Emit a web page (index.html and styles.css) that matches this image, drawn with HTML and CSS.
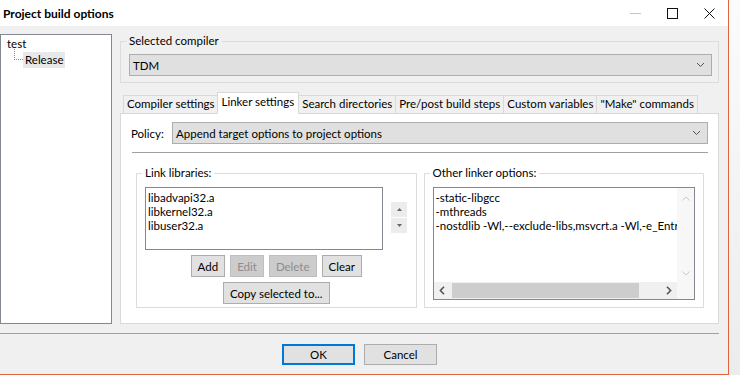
FILE: index.html
```html
<!DOCTYPE html>
<html lang="en">
  <head>
    <meta charset="UTF-8" />
    <meta name="viewport" content="width=device-width, initial-scale=1.0" />
    <title>Project build options</title>
    <link rel="stylesheet" href="styles.css">
  </head>
  <body>
    <div class="desktop">
      <div class="window">
        <div class="titlebar">
          <span class="title">Project build options</span>
          <div class="controls">
            <span class="ctl">
              <svg width="11" height="1" viewBox="0 0 11 1"><path d="M0 0.5H11" stroke="#c4c4c4" /></svg>
            </span>
            <span class="ctl">
              <svg width="11" height="11" viewBox="0 0 11 11"><rect x="0.5" y="0.5" width="10" height="10" fill="none" stroke="#111" /></svg>
            </span>
            <span class="ctl">
              <svg width="11" height="11" viewBox="0 0 11 11"><path d="M0.5 0.5L10.5 10.5M10.5 0.5L0.5 10.5" stroke="#111" /></svg>
            </span>
          </div>
        </div>

        <div class="main">
          <div class="tree">
            <div class="node">test</div>
            <div class="node child">
              <span class="branch"></span>
              <span class="selected">Release</span>
            </div>
          </div>

          <div class="options">
            <fieldset class="group compiler">
              <legend>Selected compiler</legend>
              <div class="combo">
                <span>TDM</span>
                <svg width="9" height="6" viewBox="0 0 9 6"><path d="M1 1L4.5 4.5L8 1" fill="none" stroke="#555" /></svg>
              </div>
            </fieldset>

            <div class="tabs">
              <span class="tab">Compiler settings</span>
              <span class="tab active">Linker settings</span>
              <span class="tab">Search directories</span>
              <span class="tab">Pre/post build steps</span>
              <span class="tab">Custom variables</span>
              <span class="tab">"Make" commands</span>
            </div>

            <div class="page">
              <div class="policy">
                <span class="policy-label">Policy:</span>
                <div class="combo">
                  <span>Append target options to project options</span>
                  <svg width="9" height="6" viewBox="0 0 9 6"><path d="M1 1L4.5 4.5L8 1" fill="none" stroke="#555" /></svg>
                </div>
              </div>
              <div class="rule"></div>

              <div class="groups">
                <fieldset class="group libs">
                  <legend>Link libraries:</legend>
                  <div class="list-row">
                    <div class="listbox">
                      <div>libadvapi32.a</div>
                      <div>libkernel32.a</div>
                      <div>libuser32.a</div>
                    </div>
                    <div class="spin">
                      <span class="spin-btn">
                        <svg width="5" height="3" viewBox="0 0 5 3"><path d="M0 3L2.5 0L5 3Z" fill="#666" /></svg>
                      </span>
                      <span class="spin-btn">
                        <svg width="5" height="3" viewBox="0 0 5 3"><path d="M0 0L2.5 3L5 0Z" fill="#666" /></svg>
                      </span>
                    </div>
                  </div>
                  <div class="btn-row">
                    <button class="btn">Add</button>
                    <button class="btn" disabled>Edit</button>
                    <button class="btn" disabled>Delete</button>
                    <button class="btn">Clear</button>
                  </div>
                  <div class="btn-row">
                    <button class="btn">Copy selected to...</button>
                  </div>
                </fieldset>

                <fieldset class="group other">
                  <legend>Other linker options:</legend>
                  <div class="editbox">
                    <div class="edit-body">
                      <div class="edit-text">
                        <div>-static-libgcc</div>
                        <div>-mthreads</div>
                        <div>-nostdlib -Wl,--exclude-libs,msvcrt.a -Wl,-e_Entry</div>
                      </div>
                      <div class="vscroll">
                        <svg width="8" height="5" viewBox="0 0 8 5"><path d="M0.5 4.5L4 1L7.5 4.5" fill="none" stroke="#c8c8c8" /></svg>
                        <svg width="8" height="5" viewBox="0 0 8 5"><path d="M0.5 0.5L4 4L7.5 0.5" fill="none" stroke="#c8c8c8" /></svg>
                      </div>
                    </div>
                    <div class="hscroll">
                      <span class="arrow">
                        <svg width="6" height="9" viewBox="0 0 6 9"><path d="M5 0.8L1.4 4.5L5 8.2" fill="none" stroke="#555" stroke-width="1.6" /></svg>
                      </span>
                      <span class="track"><span class="thumb"></span></span>
                      <span class="arrow">
                        <svg width="6" height="9" viewBox="0 0 6 9"><path d="M1 0.8L4.6 4.5L1 8.2" fill="none" stroke="#555" stroke-width="1.6" /></svg>
                      </span>
                      <span class="corner"></span>
                    </div>
                  </div>
                </fieldset>
              </div>
            </div>
          </div>
        </div>

        <div class="footer">
          <div class="separator"></div>
          <div class="dialog-buttons">
            <button class="btn dlg default">OK</button>
            <button class="btn dlg">Cancel</button>
          </div>
        </div>
      </div>
    </div>
  </body>
</html>
```

FILE: styles.css
```css
html,
body {
  margin: 0;
  height: 100%;
}
body {
  font-family: "Lato", "Liberation Sans", sans-serif;
  font-size: 11.5px;
  color: #000;
}
.desktop {
  width: 740px;
  height: 375px;
  display: flex;
  background: linear-gradient(#fbfbfb, #ececec);
}
.window {
  width: 728px;
  height: 374px;
  display: flex;
  flex-direction: column;
  background: #f0f0f0;
  border-right: 1px solid #e0643a;
  border-bottom: 1px solid #e0643a;
}

/* title bar */
.titlebar {
  height: 26px;
  display: flex;
  align-items: center;
  background: #fff;
}
.title {
  flex: 1;
  padding-left: 3px;
  font-weight: bold;
  font-size: 12px;
}
.controls {
  display: flex;
  height: 100%;
}
.ctl {
  width: 37px;
  display: flex;
  align-items: center;
  justify-content: center;
}

/* tree + options */
.main {
  display: flex;
  gap: 8px;
  padding: 8px 9px 0 0;
}
.tree {
  box-sizing: border-box;
  width: 112px;
  height: 290px;
  padding-top: 1px;
  background: #fff;
  border: 1px solid #828790;
}
.node {
  line-height: 16px;
  padding-left: 6px;
}
.node.child {
  display: flex;
  align-items: flex-start;
  padding-left: 13px;
}
.branch {
  width: 8px;
  height: 10px;
  margin-top: -3px;
  border-left: 1px dotted #8a8a8a;
  border-bottom: 1px dotted #8a8a8a;
}
.selected {
  padding: 0 2px;
  background: #e8e8e8;
}
.options {
  width: 599px;
}

/* group boxes */
.group {
  margin: 0;
  min-width: 0;
  border: 1px solid #dcdcdc;
}
.group legend {
  padding: 0 3px;
  margin-left: -3px;
  line-height: 14px;
}
.compiler {
  padding: 0 6px 6px 8px;
}
.combo {
  box-sizing: border-box;
  height: 22px;
  display: flex;
  align-items: center;
  justify-content: space-between;
  padding: 0 6px 0 3px;
  background: #e0e0e0;
  border: 1px solid #adadad;
}
.compiler .combo {
  margin-top: 6px;
}

/* tabs */
.tabs {
  display: flex;
  align-items: flex-end;
  margin-top: 9px;
  padding-left: 3px;
}
.tab {
  height: 17px;
  line-height: 16px;
  padding: 0 3px;
  margin-right: -1px;
  background: #f0f0f0;
  border: 1px solid #d9d9d9;
  border-bottom: none;
  white-space: nowrap;
}
.tab.active {
  position: relative;
  z-index: 1;
  height: 21px;
  line-height: 18px;
  margin: 0 -1px -1px -1px;
  padding: 0 4px;
  background: #fff;
}
.page {
  height: 211px;
  box-sizing: border-box;
  padding: 8px 10px 0 10px;
  background: #fff;
  border: 1px solid #d9d9d9;
}
.policy {
  display: flex;
  align-items: center;
}
.policy-label {
  width: 41px;
}
.policy .combo {
  flex: 1;
}
.rule {
  height: 1px;
  margin: 8px 0 0 1px;
  background: #a0a0a0;
}
.groups {
  display: flex;
  gap: 7px;
  margin: 13px 4px 0 5px;
}
.groups .group {
  flex: 1;
  height: 142px;
  box-sizing: border-box;
  padding: 0 8px 3px 8px;
}

/* link libraries */
.list-row {
  display: flex;
  gap: 8px;
  margin-top: 7px;
}
.listbox {
  box-sizing: border-box;
  width: 238px;
  height: 63px;
  padding: 3px 2px;
  line-height: 14px;
  background: #fff;
  border: 1px solid #828790;
}
.spin {
  display: flex;
  flex-direction: column;
  gap: 1px;
  margin-top: 15px;
}
.spin-btn {
  width: 16px;
  height: 15px;
  display: flex;
  align-items: center;
  justify-content: center;
  background: #ececec;
}
.btn-row {
  display: flex;
  justify-content: center;
  gap: 5px;
  margin-top: 5px;
}
.btn {
  box-sizing: border-box;
  height: 22px;
  padding: 0 6px;
  font: inherit;
  color: #000;
  background: #e1e1e1;
  border: 1px solid #adadad;
  border-radius: 0;
}
.btn:disabled {
  color: #8c8c8c;
  background: #cccccc;
  border-color: #bfbfbf;
}

/* other linker options */
.editbox {
  box-sizing: border-box;
  height: 113px;
  margin-top: 7px;
  display: flex;
  flex-direction: column;
  background: #fff;
  border: 1px solid #828790;
}
.edit-body {
  flex: 1;
  display: flex;
  min-height: 0;
}
.edit-text {
  flex: 1;
  padding: 3px 2px;
  line-height: 14px;
  white-space: nowrap;
  overflow: hidden;
}
.vscroll {
  width: 17px;
  display: flex;
  flex-direction: column;
  align-items: center;
  justify-content: space-between;
  padding: 8px 0 6px;
  box-sizing: border-box;
  background: #f7f7f7;
}
.hscroll {
  height: 17px;
  display: flex;
  background: #f0f0f0;
}
.hscroll .arrow {
  width: 17px;
  display: flex;
  align-items: center;
  justify-content: center;
}
.track {
  flex: 1;
  display: flex;
  align-items: center;
  padding: 0 21px 0 1px;
}
.thumb {
  flex: 1;
  height: 15px;
  background: #cdcdcd;
}
.corner {
  width: 17px;
  background: #f7f7f7;
}

/* footer */
.footer {
  padding-right: 9px;
}
.separator {
  height: 1px;
  margin-top: 9px;
  background: #a0a0a0;
}
.dialog-buttons {
  display: flex;
  justify-content: center;
  gap: 9px;
  margin-top: 10px;
}
.btn.dlg {
  width: 73px;
  height: 21px;
}
.btn.default {
  border: 2px solid #0078d7;
}
```
